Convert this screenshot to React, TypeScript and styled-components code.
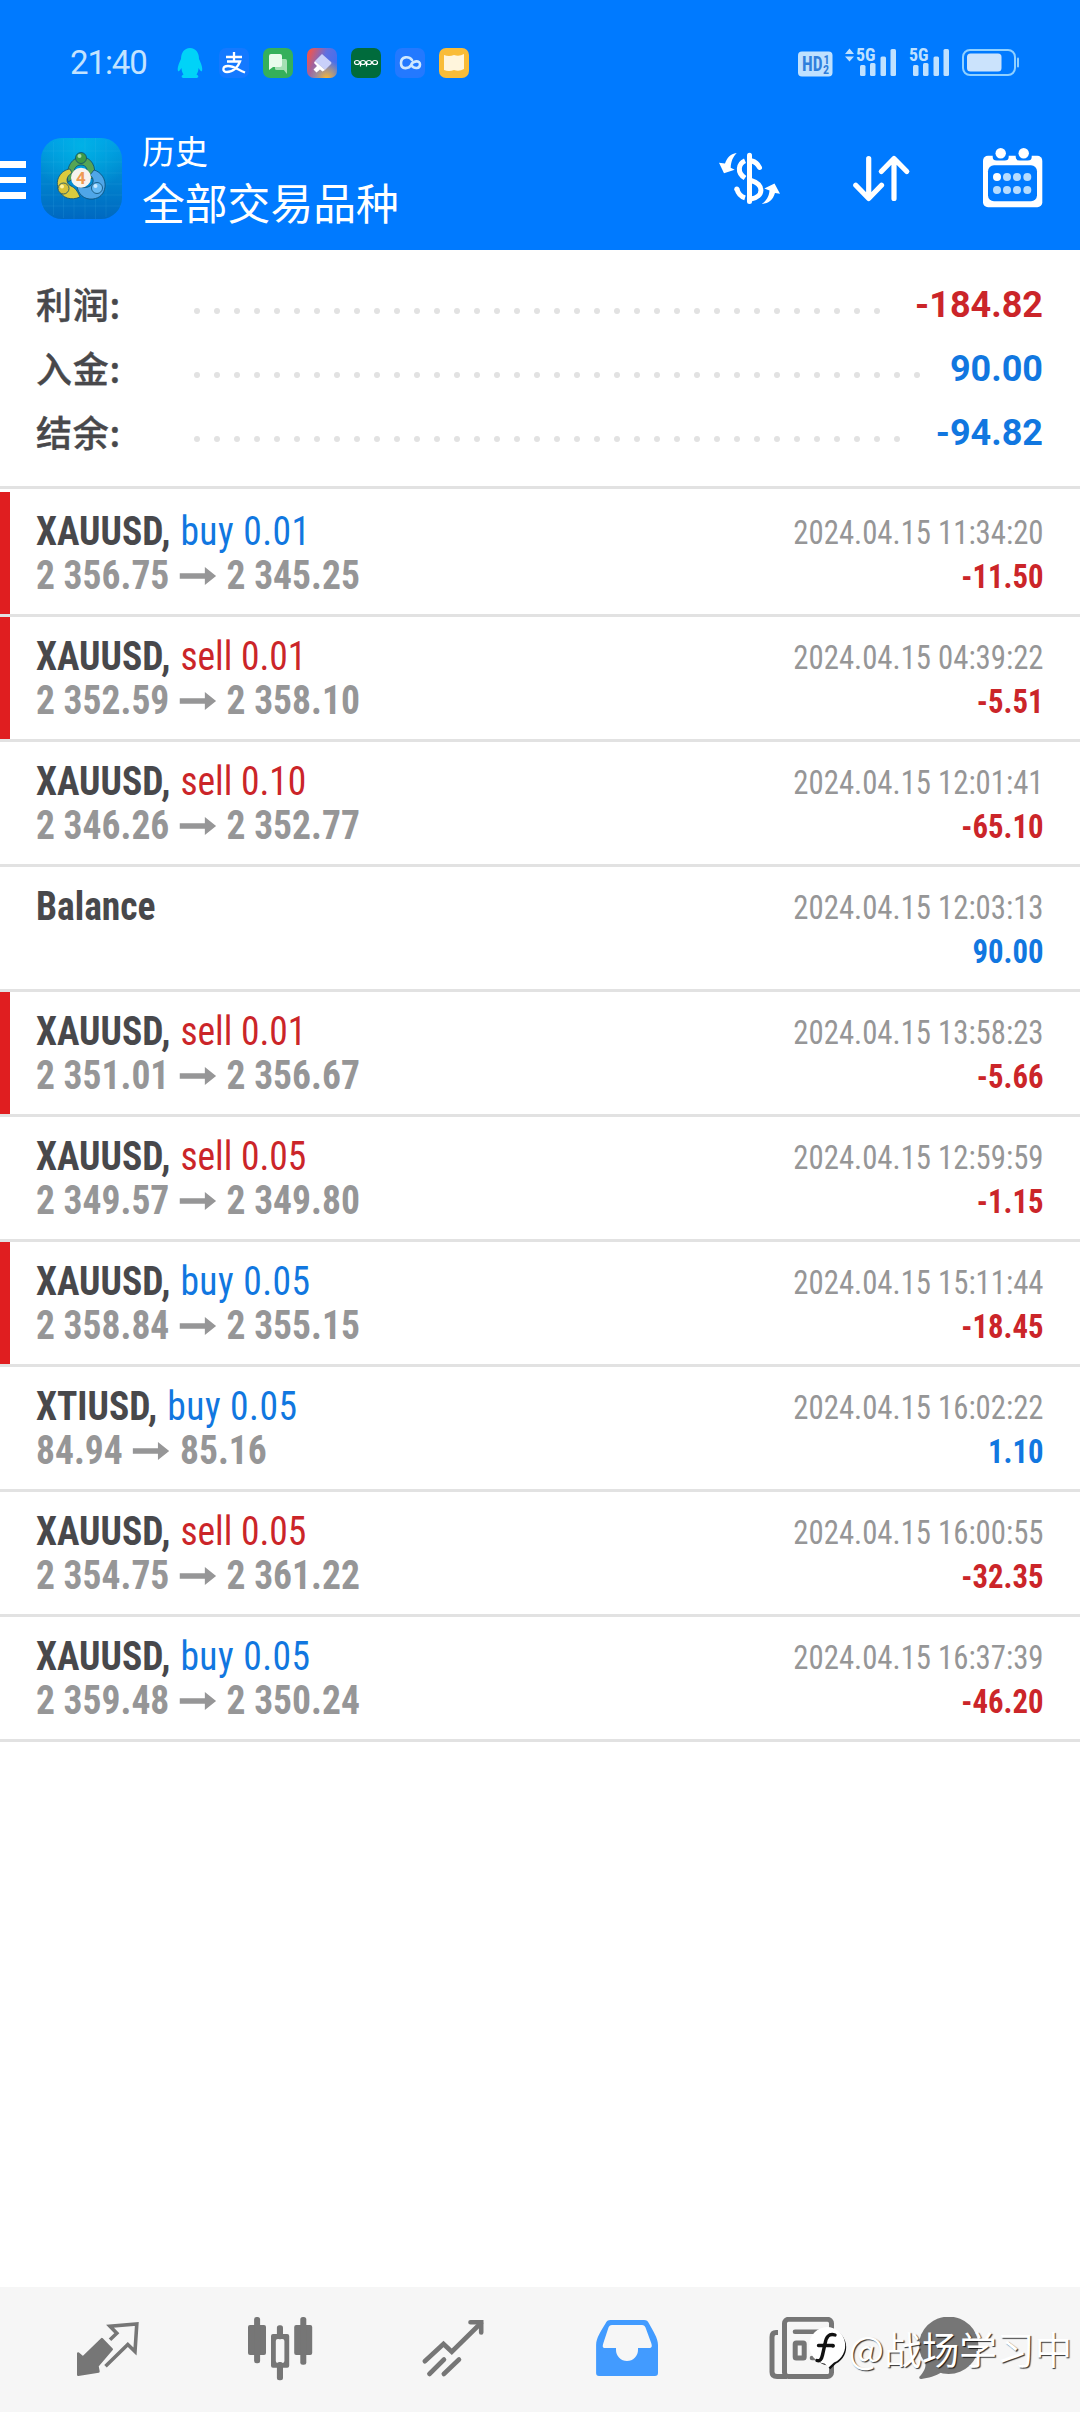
import React from 'react';
import styled, { createGlobalStyle } from 'styled-components';

const BLUE = '#007aff';
const INK = '#48484b';
const GREY = '#969697';
const NAV = '#767676';
const cjk = `Roboto, "Noto Sans CJK SC", sans-serif`;
const condensed = `"Roboto Condensed", Roboto, sans-serif`;
const amountColor = { loss: '#cb2529', gain: '#1177e0' };

type Tone = keyof typeof amountColor;

const GlobalStyle = createGlobalStyle`
  body { margin: 0; background: #fff; }
  * { box-sizing: border-box; }
  svg { display: block; flex: none; }
`;

const Screen = styled.div`
  width: 1080px;
  height: 2412px;
  display: flex;
  flex-direction: column;
  position: relative;
  overflow: hidden;
  background: #fff;
  font-family: ${cjk};
`;

const Top = styled.header`
  height: 250px;
  background: ${BLUE};
  flex: none;
`;

const StatusBar = styled.div`
  height: 126px;
  padding: 0 61px 0 70px;
  display: flex;
  align-items: center;
  justify-content: space-between;
`;

const StatusGroup = styled.div<{ $gap: number }>`
  display: flex;
  align-items: center;
  gap: ${p => p.$gap}px;
`;

const Clock = styled.div`
  width: 91px;
  font: 400 33px/40px Roboto, sans-serif;
  letter-spacing: -1.1px;
  color: #c3e3ff;
`;

const AppBar = styled.div`
  height: 105px;
  padding-right: 37px;
  display: flex;
  align-items: center;
`;

const Burger = styled.div`
  width: 26px;
  margin-right: 15px;
  display: flex;
  flex-direction: column;
  gap: 9px;
  padding-top: 3px;
`;

const BurgerLine = styled.div`
  height: 6.6px;
  background: #fff;
`;

const Titles = styled.div`
  margin-left: 20px;
  flex: 1;
  display: flex;
  flex-direction: column;
  gap: 1px;
  padding-bottom: 2px;
  color: #fff;
  font-family: "Noto Sans CJK SC", sans-serif;
  white-space: nowrap;
`;

const Caption = styled.div`
  font-size: 33px;
  line-height: 46px;
`;

const Title = styled.div`
  font-size: 42.8px;
  line-height: 54px;
`;

const Actions = styled.div`
  display: flex;
  gap: 72px;
`;

const Summary = styled.section`
  height: 239px;
  padding: 23px 37px 0 36px;
  border-bottom: 3px solid #e2e2e2;
  margin-bottom: 3px;
  flex: none;
`;

const SummaryRow = styled.div`
  height: 64px;
  display: flex;
  align-items: center;
`;

const SummaryLabel = styled.div`
  width: 150.6px;
  font: 500 36px/50px "Noto Sans CJK SC", sans-serif;
  letter-spacing: 0.8px;
  color: ${INK};
  padding-bottom: 4px;
  -webkit-text-stroke: 0.4px ${INK};
`;

const Dots = styled.div`
  flex: 1;
  display: flex;
  padding-top: 12px;
`;

const Dot = styled.span`
  width: 6px;
  height: 6px;
  margin: 0 7px;
  border-radius: 50%;
  background: #e2e2e2;
`;

const SummaryValue = styled.div<{ $tone: Tone }>`
  font: 700 36px/42px Roboto, sans-serif;
  color: ${p => amountColor[p.$tone]};
`;

const List = styled.main`
  flex: 1;
`;

const Deal = styled.article`
  height: 125px;
  display: flex;
  justify-content: space-between;
  padding-right: 36px;
  border-bottom: 3px solid #e2e2e2;
`;

const Marker = styled.div<{ $on: boolean }>`
  width: 10px;
  margin-right: 26px;
  background: ${p => (p.$on ? '#e01e20' : 'transparent')};
`;

const Info = styled.div`
  flex: 1;
  padding-top: 17px;
  font-family: ${condensed};
  font-size: 40px;
  font-weight: 700;
  white-space: nowrap;
  transform: scaleX(0.938);
  transform-origin: left;
`;

const Symbol = styled.div`
  line-height: 45px;
  color: ${INK};
`;

const Side = styled.span<{ $buy: boolean }>`
  font-weight: 400;
  margin-left: 1.5px;
  letter-spacing: ${p => (p.$buy ? 0.5 : 0)}px;
  color: ${p => (p.$buy ? '#1177e0' : '#cb2529')};
`;

const Prices = styled.div`
  display: flex;
  align-items: center;
  gap: 11px;
  line-height: 43px;
  color: ${GREY};
`;

const Result = styled.div`
  padding-top: 19px;
  text-align: right;
  font-family: ${condensed};
  font-size: 33.5px;
  line-height: 44px;
  transform: scaleX(0.918);
  transform-origin: right;
`;

const Time = styled.div`
  color: ${GREY};
`;

const Profit = styled.div<{ $tone: Tone }>`
  font-weight: 700;
  color: ${p => amountColor[p.$tone]};
`;

const NavBar = styled.nav`
  height: 125px;
  padding-left: 76px;
  background: #f6f6f6;
  display: grid;
  grid-template-columns: 172px 173px 174px 174px 147px 1fr;
  align-items: center;
`;

const Watermark = styled.div`
  position: absolute;
  right: 8px;
  bottom: 38px;
  display: flex;
  align-items: center;
  font: 400 37.6px/52px "Noto Sans CJK SC", sans-serif;
  color: #fff;
  text-shadow: 1.2px 1.2px 1px rgba(0, 0, 0, 0.8);
  white-space: nowrap;
`;

const Tile = ({ fill, children }: { fill: string; children?: React.ReactNode }) => (
  <svg width="30" height="30" viewBox="0 0 30 30">
    <rect width="30" height="30" rx="7" fill={fill} />
    {children}
  </svg>
);

const StatusIcons = () => (
  <StatusGroup $gap={14}>
    <svg width="30" height="30" viewBox="0 0 30 30">
      <path d="M15 0C9 0 6 5 6 11C4 15 2 20 3 23C4 24 5 22 6.500 20C6.500 23 7.500 25 8.500 26.500C6 27.500 6 30 9 30H21C24 30 24 27.500 21.500 26.500C22.500 25 23.500 23 23.500 20C25 22 26 24 27 23C28 20 26 15 24 11C24 5 21 0 15 0Z" fill="#00d3f8" />
    </svg>
    <Tile fill="#1479ff">
      <path d="M7 9H23M15 4V13M8 13.500H21C19 19 14 24 8 24C3 24 3 18 9 18C15 18 19 22 26 24.500" fill="none" stroke="#fff" strokeWidth="2.300" />
    </Tile>
    <Tile fill="#35b05b">
      <rect x="12" y="11" width="12" height="11" rx="1.500" fill="#a5e0b4" />
      <path d="M20 21H24V26Z" fill="#a5e0b4" />
      <path d="M8 6H17Q19 6 19 8V17Q19 19 17 19H10L6 22V8Q6 6 8 6Z" fill="#e8fbec" />
    </Tile>
    <svg width="30" height="30" viewBox="0 0 30 30">
      <defs>
        <linearGradient id="paint" x1="0" y1="0.3" x2="1" y2="0.7">
          <stop offset="0" stopColor="#f0554f" />
          <stop offset="0.500" stopColor="#5f6fe0" />
          <stop offset="1" stopColor="#3f6ff0" />
        </linearGradient>
        <radialGradient id="paintWarm" cx="0.65" cy="1" r="0.6">
          <stop offset="0" stopColor="#f5b53a" />
          <stop offset="1" stopColor="#f5b53a" stopOpacity="0" />
        </radialGradient>
      </defs>
      <rect width="30" height="30" rx="7" fill="url(#paint)" />
      <rect width="30" height="30" rx="7" fill="url(#paintWarm)" />
      <path d="M15 6L24 14Q25 15 24 16L18 22L8 13Z" fill="#c9d0fa" />
      <path d="M8 13L18 22L15.500 23.500L13 21.500L9.500 24.500L6.500 21.500L10 18L7 15Z" fill="#fff" />
    </svg>
    <Tile fill="#006b3c">
      <g fill="none" stroke="#fff" strokeWidth="1.200">
        <ellipse cx="6" cy="14.500" rx="2.500" ry="2" />
        <ellipse cx="12" cy="14.500" rx="2.500" ry="2" />
        <ellipse cx="18" cy="14.500" rx="2.500" ry="2" />
        <ellipse cx="24" cy="14.500" rx="2.500" ry="2" />
        <path d="M9.500 14V18.500M15.500 14V18.500" />
      </g>
    </Tile>
    <Tile fill="#2379ff">
      <path d="M17 12C14 8 6 8 6 15C6 22 14 21 16 17C18 12.500 25 12 25 16.500C25 21 19 21 16.500 17.500" fill="none" stroke="#cfe8ff" strokeWidth="2.600" strokeLinecap="round" />
    </Tile>
    <Tile fill="#f9bc38">
      <path d="M5 7Q10 9 15 7Q20 9 25 6V21Q20 24 15 22Q10 24 5 22Z" fill="#fff5dc" />
    </Tile>
  </StatusGroup>
);

const Signal = ({ arrows }: { arrows?: boolean }) => (
  <svg width={arrows ? 52 : 41} height="46" viewBox={arrows ? '0 -8 52 46' : '11 -8 41 46'} fill="#bfe1ff">
    {arrows && <path d="M0 6L4.500 0.500L9 6ZM0 8.500L4.500 13.500L9 8.500Z" />}
    <text x="11" y="13" fontSize="18.500" fontWeight="700" fontFamily="Roboto Condensed, sans-serif" textLength="19.500" lengthAdjust="spacingAndGlyphs">5G</text>
    <rect x="15" y="17" width="5.500" height="11" rx="1.500" />
    <rect x="25" y="15" width="5.500" height="13" rx="1.500" />
    <rect x="35.500" y="8.500" width="5.500" height="19.500" rx="1.500" />
    <rect x="45.500" y="1" width="5.500" height="27" rx="1.500" />
  </svg>
);

const SystemIcons = () => (
  <StatusGroup $gap={12}>
    <svg width="35" height="30" viewBox="0 0 35 30">
      <rect y="3.500" width="34.500" height="25" rx="4" fill="#bfe1ff" />
      <g fill="#2f7fdc" fontWeight="700" fontFamily="Roboto Condensed, sans-serif">
        <text x="4" y="22.500" fontSize="20" textLength="20.500" lengthAdjust="spacingAndGlyphs">HD</text>
        <text x="25.500" y="15.500" fontSize="12">1</text>
        <text x="25" y="26" fontSize="12">2</text>
      </g>
    </svg>
    <Signal arrows />
    <Signal />
    <svg width="57" height="30" viewBox="0 0 57 30">
      <rect x="1" y="2" width="52" height="25" rx="7" fill="none" stroke="#8fd0ff" strokeWidth="2" />
      <rect x="5" y="5.500" width="34.500" height="18" rx="3.500" fill="#cbe3fc" />
      <rect x="55" y="9.500" width="2" height="10" rx="1" fill="#8fd0ff" />
    </svg>
  </StatusGroup>
);

const AppLogo = () => (
  <svg width="81" height="81" viewBox="0 0 81 81">
    <defs>
      <linearGradient id="tile" x1="0" y1="0" x2="0" y2="1">
        <stop offset="0" stopColor="#009ae6" />
        <stop offset="0.300" stopColor="#0090d4" />
        <stop offset="1" stopColor="#0068c0" />
      </linearGradient>
      <radialGradient id="glow" cx="0.5" cy="0.1" r="0.6">
        <stop offset="0" stopColor="#00b8e8" stopOpacity="0.8" />
        <stop offset="1" stopColor="#00b8e8" stopOpacity="0" />
      </radialGradient>
    </defs>
    <rect width="81" height="81" rx="21" fill="url(#tile)" />
    <rect width="81" height="81" rx="21" fill="url(#glow)" />
    <path d="M12.500 4V77M22.500 1V80M33 0V81M44 0V81M54.500 0V81M65 2V79M2 13H79M0 24H81M0 35H81M0 46H81M0 57H81M1 68H80" stroke="#4fc4ee" strokeOpacity="0.13" />
    <g stroke="#0d4d72" strokeOpacity="0.8">
      <path d="M27 44C24 28 32 19 40.500 19C50 19 56 28 53 41L44 39C48 33 46 27 40 27C34 27 31 33 35 39Z" fill="#55a556" />
      <path d="M18 52C13 42 20 32 29 31L31 35C25 38 24 45 30 48C34 50 36 52 39 59C30 63 21 60 18 52Z" fill="#dccb3e" />
      <path d="M64 49C65 41 60 34 53 32L49 37C54 41 53 47 47 49C43 50 40 50 36 48C37 56 43 62 52 61C59 60 63 56 64 49Z" fill="#4fa6e8" />
      <circle cx="40" cy="20" r="5.500" fill="#3f9a47" />
      <circle cx="22.500" cy="50.500" r="5.500" fill="#d8c139" />
      <circle cx="56" cy="50" r="5.500" fill="#66baf5" />
    </g>
    <circle cx="38.500" cy="18" r="2" fill="#a9dca3" />
    <circle cx="21" cy="48.500" r="2" fill="#fff3a0" />
    <circle cx="54.500" cy="48" r="2" fill="#c9e9ff" />
    <circle cx="40" cy="39.700" r="10" fill="#f7f3ee" />
    <text x="40" y="46" textAnchor="middle" fontFamily="Roboto, sans-serif" fontWeight="700" fontSize="17" fill="#ee9a53">4</text>
  </svg>
);

const CurrencyIcon = () => (
  <svg width="62" height="61" viewBox="0 0 62 61">
    <g fill="none" stroke="#fff" strokeWidth="5">
      <path d="M30.500 7.200V53.500" strokeLinecap="round" />
      <path d="M26 12.700C19.500 15.500 17.500 24.500 26 30" />
      <path d="M33 13C37 14 39 16.500 40.500 19.500" strokeLinecap="round" />
      <path d="M17.800 40.500C19 45.500 21.500 48.500 26 49.800" />
      <path d="M32 32.500C45.500 36 45 49 32 51" />
    </g>
    <circle cx="17.800" cy="41" r="2.500" fill="#fff" />
    <path d="M17.700 5C11 6 8 10 6 15.500L0 14.700L5 25.300L15.700 21.700L11.700 19.700C12 13 14 9 17.700 5Z" fill="#fff" />
    <path d="M43 55.900C50 55.500 54 51.500 56 45L61 45.700L55.500 35.500L45.300 40.500L50.500 42.500C50 49 47 53 43 55.900Z" fill="#fff" />
  </svg>
);

const SortIcon = () => (
  <svg width="58" height="61" viewBox="0 0 58 61" fill="none" stroke="#fff" strokeWidth="5.200" strokeLinecap="round" strokeLinejoin="round">
    <path d="M15.700 10.500V50M2.800 37.200L15.700 50.500L28.500 37.200" />
    <path d="M41 50.500V11M28.300 23.500L41 10.500L53.800 23.500" />
  </svg>
);

const CalendarIcon = () => (
  <svg width="60" height="61" viewBox="0 0 60 61">
    <rect y="7.700" width="59.300" height="51.600" rx="5" fill="#fff" />
    <g fill={BLUE}>
      <rect x="5" y="17.300" width="49" height="36" rx="6" />
      <path d="M9.700 4H25.700V9Q25.700 12.500 21.700 12.500H13.700Q9.700 12.500 9.700 9ZM32.700 4H48.700V9Q48.700 12.500 44.700 12.500H36.700Q32.700 12.500 32.700 9Z" />
    </g>
    <circle cx="17.700" cy="5.200" r="5.200" fill="#fff" />
    <circle cx="40.700" cy="5.200" r="5.200" fill="#fff" />
    {[29, 42].map(y =>
      [14, 24, 34, 44.3].map(x => (
        <circle key={`${x}-${y}`} cx={x} cy={y} r="4" fill={x === 14 && y === 29 ? '#fff' : '#b5dcff'} />
      )),
    )}
  </svg>
);

const PriceArrow = () => (
  <svg width="39" height="18" viewBox="0 0 39 18">
    <path d="M0 6.300H27V0L39 9L27 18V11.700H0Z" fill={GREY} />
  </svg>
);

const QuotesIcon = () => (
  <svg width="64" height="65" viewBox="0 0 64 65">
    <path d="M25.900 22L35.800 32.300L21.500 49L22.500 54.500L2.200 57.800V36.500L6.800 40.500Z" fill={NAV} stroke={NAV} strokeWidth="2.400" strokeLinejoin="round" />
    <path d="M34 22.800L40.800 16.300L34 9.300L60.800 7L59 34.500L51.800 27.500L29.500 49.300" fill="none" stroke={NAV} strokeWidth="3.600" />
  </svg>
);

const ChartIcon = () => (
  <svg width="65" height="65" viewBox="0 0 65 65" fill={NAV}>
    <rect y="8" width="18" height="30" rx="2" />
    <rect x="6.100" width="6" height="46.300" rx="2.500" />
    <rect x="28.900" y="8.300" width="6.100" height="14" rx="2.500" />
    <rect x="28.900" y="45" width="6.100" height="18.300" rx="2.500" />
    <path d="M25 17H39.200Q41.200 17 41.200 19V48.700Q41.200 50.700 39.200 50.700H25Q23 50.700 23 48.700V19Q23 17 25 17ZM29.800 22Q27.800 22 27.800 24V44Q27.800 46 29.800 46H34.400Q36.400 46 36.400 44V24Q36.400 22 34.400 22Z" fillRule="evenodd" />
    <rect x="46.200" y="8" width="18" height="30" rx="2" />
    <rect x="52.300" width="6" height="47.700" rx="2.500" />
  </svg>
);

const TradeIcon = () => (
  <svg width="64" height="65" viewBox="0 0 64 65" fill="none" stroke={NAV} strokeWidth="4.600" strokeLinecap="round">
    <path d="M3.800 44.300L22.500 27L30.800 34.700L60 6" />
    <path d="M49.500 5.300H60.200V15.500" />
    <path d="M23 42.500L8.400 57M38 42.500L22.800 57" />
  </svg>
);

const HistoryIcon = () => (
  <svg width="64" height="65" viewBox="0 0 64 65">
    <path
      d="M15.500 3H49C51.500 3 53 4 54 6.500C58 14 63 21 63 28V56Q63 59 60 59H4Q1.100 59 1.100 56V28C1.100 21 6 14 10.500 6.500C11.500 4 13 3 15.500 3ZM17 8C15 8 14.200 9 13.500 10.500L8.400 26C7.300 29.500 7.500 31 10 31H21V33A11 11 0 0 0 43 33V31H54C57 31 57.300 29.500 56.200 26L50.500 10.500C49.800 9 49 8 47 8Z"
      fill="#429bff"
      fillRule="evenodd"
    />
  </svg>
);

const NewsIcon = () => (
  <svg width="66" height="65" viewBox="0 0 66 65" fill="none" stroke={NAV} strokeWidth="5">
    <path d="M9 15.500H7Q3 15.500 3 20V55Q3 59.500 8 59.500H18" />
    <rect x="15.500" y="2.300" width="47" height="57.200" rx="4" />
    <path d="M26 14.800H55.500M43 27.500H55.500M43 41H55.500" strokeWidth="4.600" strokeLinecap="round" />
    <rect x="26.200" y="26" width="9" height="15" rx="1" />
  </svg>
);

const ChatIcon = () => (
  <svg width="64" height="65" viewBox="0 0 64 65" fill={NAV}>
    <ellipse cx="32.700" cy="28.300" rx="29.700" ry="28.700" />
    <path d="M9 45C11 50 7 56 3.200 60Q3 62.500 5.500 62C12 61 20 59 25.700 55Z" />
  </svg>
);

const BadgeMark = () => (
  <svg width="42" height="48" viewBox="0 0 42 48">
    <path d="M22 4A18.500 18.500 0 0 1 28 39L22.500 44.500L18.500 40.500A18.500 18.500 0 0 1 22 4Z" fill="#111" transform="translate(0.8 0.8)" />
    <path d="M20 3A18.500 18.500 0 0 1 27 38.500L21 44L18 39.800A18.500 18.500 0 0 1 20 3Z" fill="#fff" />
    <path d="M28 11C22 9 19 13 18 20L15.500 31Q14 38 10 36.500M11.500 21.500H26" fill="none" stroke="#111" strokeWidth="3.400" strokeLinecap="round" />
    <circle cx="26" cy="22" r="1.800" fill="#111" />
  </svg>
);

interface DealData {
  symbol: string;
  side?: string;
  from?: string;
  to?: string;
  time: string;
  profit: string;
  marked?: boolean;
}

const deals: DealData[] = [
  { symbol: 'XAUUSD', side: 'buy 0.01', from: '2 356.75', to: '2 345.25', time: '2024.04.15 11:34:20', profit: '-11.50', marked: true },
  { symbol: 'XAUUSD', side: 'sell 0.01', from: '2 352.59', to: '2 358.10', time: '2024.04.15 04:39:22', profit: '-5.51', marked: true },
  { symbol: 'XAUUSD', side: 'sell 0.10', from: '2 346.26', to: '2 352.77', time: '2024.04.15 12:01:41', profit: '-65.10' },
  { symbol: 'Balance', time: '2024.04.15 12:03:13', profit: '90.00' },
  { symbol: 'XAUUSD', side: 'sell 0.01', from: '2 351.01', to: '2 356.67', time: '2024.04.15 13:58:23', profit: '-5.66', marked: true },
  { symbol: 'XAUUSD', side: 'sell 0.05', from: '2 349.57', to: '2 349.80', time: '2024.04.15 12:59:59', profit: '-1.15' },
  { symbol: 'XAUUSD', side: 'buy 0.05', from: '2 358.84', to: '2 355.15', time: '2024.04.15 15:11:44', profit: '-18.45', marked: true },
  { symbol: 'XTIUSD', side: 'buy 0.05', from: '84.94', to: '85.16', time: '2024.04.15 16:02:22', profit: '1.10' },
  { symbol: 'XAUUSD', side: 'sell 0.05', from: '2 354.75', to: '2 361.22', time: '2024.04.15 16:00:55', profit: '-32.35' },
  { symbol: 'XAUUSD', side: 'buy 0.05', from: '2 359.48', to: '2 350.24', time: '2024.04.15 16:37:39', profit: '-46.20' },
];

const totals: { label: string; value: string; tone: Tone; dots: number }[] = [
  { label: '利润:', value: '-184.82', tone: 'loss', dots: 35 },
  { label: '入金:', value: '90.00', tone: 'gain', dots: 37 },
  { label: '结余:', value: '-94.82', tone: 'gain', dots: 36 },
];

const DealRow = ({ deal }: { deal: DealData }) => (
  <Deal>
    <Marker $on={!!deal.marked} />
    <Info>
      <Symbol>
        {deal.symbol}
        {deal.side && (
          <>
            , <Side $buy={deal.side.startsWith('buy')}>{deal.side}</Side>
          </>
        )}
      </Symbol>
      {deal.from && (
        <Prices>
          {deal.from}
          <PriceArrow />
          {deal.to}
        </Prices>
      )}
    </Info>
    <Result>
      <Time>{deal.time}</Time>
      <Profit $tone={deal.profit.startsWith('-') ? 'loss' : 'gain'}>{deal.profit}</Profit>
    </Result>
  </Deal>
);

export default function App() {
  return (
    <Screen>
      <GlobalStyle />
      <Top>
        <StatusBar>
          <StatusGroup $gap={14}>
            <Clock>21:40</Clock>
            <StatusIcons />
          </StatusGroup>
          <SystemIcons />
        </StatusBar>
        <AppBar>
          <Burger>
            <BurgerLine />
            <BurgerLine />
            <BurgerLine />
          </Burger>
          <AppLogo />
          <Titles>
            <Caption>历史</Caption>
            <Title>全部交易品种</Title>
          </Titles>
          <Actions>
            <CurrencyIcon />
            <SortIcon />
            <CalendarIcon />
          </Actions>
        </AppBar>
      </Top>
      <Summary>
        {totals.map(total => (
          <SummaryRow key={total.label}>
            <SummaryLabel>{total.label}</SummaryLabel>
            <Dots>
              {Array.from({ length: total.dots }, (_, i) => (
                <Dot key={i} />
              ))}
            </Dots>
            <SummaryValue $tone={total.tone}>{total.value}</SummaryValue>
          </SummaryRow>
        ))}
      </Summary>
      <List>
        {deals.map(deal => (
          <DealRow key={deal.time} deal={deal} />
        ))}
      </List>
      <NavBar>
        <QuotesIcon />
        <ChartIcon />
        <TradeIcon />
        <HistoryIcon />
        <NewsIcon />
        <ChatIcon />
      </NavBar>
      <Watermark>
        <BadgeMark />
        <span>@战场学习中</span>
      </Watermark>
    </Screen>
  );
}
